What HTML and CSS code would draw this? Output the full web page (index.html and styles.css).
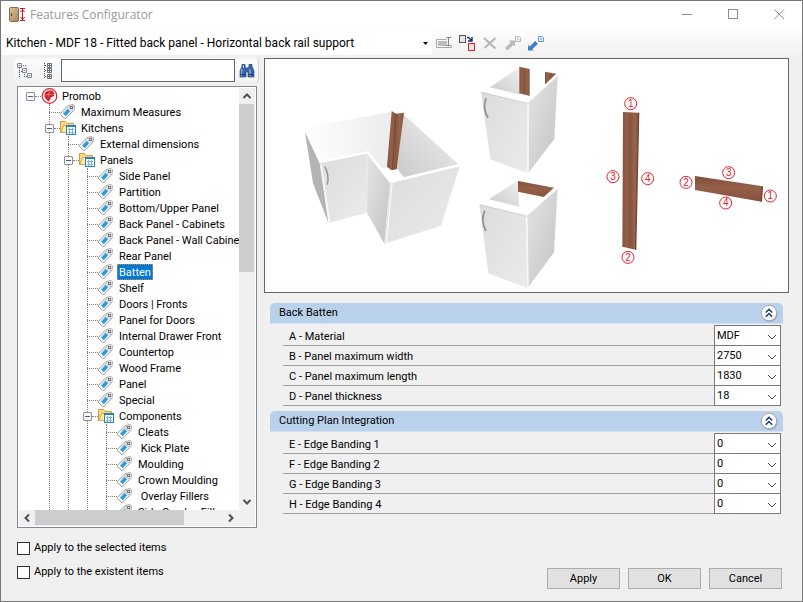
FILE: index.html
```html
<!DOCTYPE html>
<html lang="en">
  <head>
    <meta charset="UTF-8" />
    <meta name="viewport" content="width=device-width, initial-scale=1.0" />
    <title>Features Configurator</title>
    <link rel="stylesheet" href="styles.css">
  </head>
  <body>
    <!-- Shared icons -->
    <svg class="sprite" aria-hidden="true">
      <symbol id="tag" viewBox="0 0 17 16">
        <path d="M.5 9.4 8 1.6 13.2.6 14.4 1.8 13.8 6.4 5.8 14.4 4.6 14.4.5 10.6z" fill="#fbfbfb" stroke="#9a9a9a"/>
        <path d="M8.4 2 13 1 14 2 13.4 6.2 11.6 7.8 7 3.6z" fill="#d6d6d6"/>
        <path d="M3 9.6 7.4 4.6 10.2 7.2 5.8 12.2z" fill="#2f9ad8"/>
        <path d="M3.8 9 7.4 5" stroke="#8accf0"/>
        <rect x="10.5" y="2.5" width="2" height="2" fill="#fff" stroke="#777"/>
      </symbol>
      <symbol id="folder" viewBox="0 0 17 16">
        <path d="M.5 12.5V1.5H5.5L7 3.5H13.5V12.5z" fill="#f8d98a" stroke="#d99a32"/>
        <path d="M1 12.5 3.5 5.5H15.5L13.5 12.5z" fill="#fde9ae" stroke="#e0a848"/>
        <rect x="6.5" y="5.5" width="9" height="9" fill="#fff" stroke="#2383b8"/>
        <path d="M7 6.5H15" stroke="#2383b8"/>
        <path d="M8 9.5H14M8 12.5H14M9.5 8V14M12.5 8V14" stroke="#7cb6da"/>
      </symbol>
      <symbol id="promob" viewBox="0 0 16 16">
        <circle cx="8" cy="8" r="7.3" fill="#fff" stroke="#d8202f" stroke-width="1.2"/>
        <path d="M3.6 4.6 6.4 2.6 10.5 2.6 12.8 5 12.4 8.2 9.4 9.2 8.8 11 7.6 13.4 5.6 12.6 4.2 10.4 3 9 3 6z" fill="#d8202f"/>
        <path d="M7.6 2.8 7.2 8.4M4 6.8 12 6.4" stroke="#f4a0a4" stroke-width=".6"/>
      </symbol>
      <symbol id="chevron" viewBox="0 0 10 6">
        <path d="M1 1 5 5 9 1" fill="none" stroke="currentColor"/>
      </symbol>
      <symbol id="arrow" viewBox="0 0 10 6">
        <path d="M1.5 5 5 1.5 8.5 5" fill="none" stroke="currentColor" stroke-width="2"/>
      </symbol>
      <symbol id="collapse" viewBox="0 0 18 18">
        <circle cx="9.5" cy="9.8" r="8" fill="#8d9bb4"/>
        <circle cx="9" cy="9" r="7.7" fill="#fff" stroke="#a2a9ba"/>
        <path d="M5.8 8.5 9 5.3 12.2 8.5M5.8 12.7 9 9.5 12.2 12.7" fill="none" stroke="#1c3768" stroke-width="1.5"/>
      </symbol>
      <linearGradient id="side" x2="1" y2="1">
        <stop stop-color="#e6e6e6"/>
        <stop offset="1" stop-color="#c2c2c2"/>
      </linearGradient>
      <linearGradient id="door" x2="1" y2="1">
        <stop stop-color="#dcdcdc"/>
        <stop offset="1" stop-color="#ebebeb"/>
      </linearGradient>
      <linearGradient id="inner" x1="1" x2="0" y2="1">
        <stop stop-color="#f0f0f0"/>
        <stop offset="1" stop-color="#cacaca"/>
      </linearGradient>
      <linearGradient id="wall" x2="1">
        <stop stop-color="#fff"/>
        <stop offset="1" stop-color="#ececec"/>
      </linearGradient>
      <linearGradient id="wood" x2="1">
        <stop stop-color="#865440"/>
        <stop offset=".25" stop-color="#935f48"/>
        <stop offset=".5" stop-color="#88553f"/>
        <stop offset=".75" stop-color="#96634b"/>
        <stop offset="1" stop-color="#885540"/>
      </linearGradient>
      <linearGradient id="wood-flat" x2="0" y2="1">
        <stop stop-color="#834e38"/>
        <stop offset=".45" stop-color="#95604a"/>
        <stop offset="1" stop-color="#86523d"/>
      </linearGradient>
      <linearGradient id="beige" x2="1" y2="1">
        <stop stop-color="#dcc39c"/>
        <stop offset="1" stop-color="#a98458"/>
      </linearGradient>
    </svg>

    <div class="window">
      <header class="titlebar">
        <svg class="app-icon" width="17" height="16" viewBox="0 0 17 16">
          <rect x=".5" y=".5" width="9" height="14" rx="1" fill="url(#beige)" stroke="#8c6d48"/>
          <rect x="2" y="6" width="1" height="3" fill="#5c4630"/>
          <path d="M11 1.5H16M11 13.5H16M13.5 2V13M11.5 5 13.5 2.5 15.5 5M11.5 10 13.5 12.5 15.5 10" fill="none" stroke="#d81428"/>
        </svg>
        <h1>Features Configurator</h1>
        <button class="caption" aria-label="Minimize"><svg width="11" height="11"><path d="M0 5.5H10"/></svg></button>
        <button class="caption" aria-label="Maximize"><svg width="11" height="11"><rect x=".5" y=".5" width="9" height="9"/></svg></button>
        <button class="caption" aria-label="Close"><svg width="11" height="11"><path d="M.5.5 10 10M10 .5.5 10"/></svg></button>
      </header>

      <div class="toolbar">
        <div class="profile">
          <select aria-label="Profile">
            <option>Kitchen - MDF 18 - Fitted back panel - Horizontal back rail support</option>
          </select>
          <svg width="5" height="3"><path d="M0 0H5L2.5 3z"/></svg>
        </div>
        <button class="tool" aria-label="Rename">
          <svg width="16" height="16" viewBox="0 0 16 16" fill="none" stroke="#a9a9a9">
            <path d="M10.5 4.5H.5V12.5H15.5V11"/>
            <rect x="2" y="6" width="9" height="5" fill="#bdbdbd" stroke="none"/>
            <path d="M10.5 2.5H15M10.5 10.5H15M12.5 2.5V10.5" stroke="#858585"/>
          </svg>
        </button>
        <button class="tool" aria-label="Duplicate">
          <svg width="16" height="16" viewBox="0 0 16 16" fill="#e4e4ea">
            <rect x=".5" y=".5" width="6" height="7" stroke="#5c5260"/>
            <rect x="9.5" y="8.5" width="6" height="7" stroke="#f01818"/>
            <path d="M8 2.5H9.5L12 5M13 2V6H9" fill="none" stroke="#142a78" stroke-width="1.4"/>
          </svg>
        </button>
        <button class="tool" aria-label="Delete">
          <svg width="16" height="16" viewBox="0 0 16 16"><path d="M2 3 13.5 13.5M13.5 3 2.5 13" stroke="#b5b5b5" stroke-width="2"/></svg>
        </button>
        <button class="tool" aria-label="Export">
          <svg width="16" height="16" viewBox="0 0 16 16">
            <path d="M4 5.5H10V11.5L8 10 2.5 15.5 0 13 5.8 7.5z" fill="#b9b9b9"/>
            <path d="M10.5 1.5H14L15.5 3V6.5H10.5zM12 4H14" fill="#eee" stroke="#b9b9b9"/>
          </svg>
        </button>
        <button class="tool" aria-label="Import">
          <svg width="16" height="16" viewBox="0 0 16 16">
            <path d="M0 15.5V10L1.8 11.5 7.2 6 10 8.8 4.2 14.2 5.8 15.5z" fill="#3a7fd0"/>
            <path d="M10.5 1.5H14L15.5 3V6.5H10.5zM12 4H14" fill="#eef5ff" stroke="#5a97dc"/>
          </svg>
        </button>
      </div>

      <main class="content">
        <aside class="sidebar">
          <div class="search">
            <button class="tool" aria-label="Expand all">
              <svg width="16" height="16" viewBox="0 0 16 16" fill="#fff">
                <path d="M2.5 5V15M5 8.5H2.5M7.5 9V15M10 13.5H7.5M6 2.5H9" stroke="#555" stroke-dasharray="1 1"/>
                <path d="M.5.5H4.5V4.5H.5zM5.5 5.5H9.5V9.5H5.5zM10.5 10.5H14.5V14.5H10.5zM1.5 2.5H3.5M6.5 7.5H8.5M11.5 12.5H13.5" stroke="#7b8a93"/>
              </svg>
            </button>
            <button class="tool" aria-label="Collapse all">
              <svg width="16" height="16" viewBox="0 0 16 16" fill="#fff">
                <path d="M4.5 0V16M5 2.5H8M5 7.5H8M5 13.5H8" stroke="#555" stroke-dasharray="1 1"/>
                <path d="M7.5.5H11.5V4.5H7.5zM7.5 5.5H11.5V9.5H7.5zM7.5 11.5H11.5V15.5H7.5zM9.5 1V4M8 2.5H11M9.5 6V9M8 7.5H11M9.5 12V15M8 13.5H11" stroke="#66727a"/>
              </svg>
            </button>
            <input type="text" aria-label="Search">
            <button class="tool" aria-label="Find">
              <svg width="16" height="14" viewBox="0 0 16 14">
                <path d="M3 0H6V2L7 4H9L10 2V0H13V2L15 7V13H9V8H7V13H1V7L3 2z" fill="#3561a6" stroke="#27487e" stroke-width=".6"/>
                <path d="M3 5 2.4 12M11 5V12M4.5 1V4" stroke="#a9c8f2"/>
                <path d="M1.5 10.5H6.5M9.5 10.5H14.5" stroke="#1e3c72"/>
              </svg>
            </button>
          </div>

          <div class="tree">
            <div class="tree-view">
              <ul class="root">
                <li><div class="node folder"><button aria-label="Collapse"></button><svg><use href="#promob"/></svg><span>Promob</span></div>
                  <ul>
                    <li><div class="node"><svg><use href="#tag"/></svg><span>Maximum Measures</span></div></li>
                    <li><div class="node folder"><button aria-label="Collapse"></button><svg><use href="#folder"/></svg><span>Kitchens</span></div>
                      <ul>
                        <li><div class="node"><svg><use href="#tag"/></svg><span>External dimensions</span></div></li>
                        <li><div class="node folder"><button aria-label="Collapse"></button><svg><use href="#folder"/></svg><span>Panels</span></div>
                          <ul>
                            <li><div class="node"><svg><use href="#tag"/></svg><span>Side Panel</span></div></li>
                            <li><div class="node"><svg><use href="#tag"/></svg><span>Partition</span></div></li>
                            <li><div class="node"><svg><use href="#tag"/></svg><span>Bottom/Upper Panel</span></div></li>
                            <li><div class="node"><svg><use href="#tag"/></svg><span>Back Panel - Cabinets</span></div></li>
                            <li><div class="node"><svg><use href="#tag"/></svg><span>Back Panel - Wall Cabinets</span></div></li>
                            <li><div class="node"><svg><use href="#tag"/></svg><span>Rear Panel</span></div></li>
                            <li><div class="node selected"><svg><use href="#tag"/></svg><span>Batten</span></div></li>
                            <li><div class="node"><svg><use href="#tag"/></svg><span>Shelf</span></div></li>
                            <li><div class="node"><svg><use href="#tag"/></svg><span>Doors | Fronts</span></div></li>
                            <li><div class="node"><svg><use href="#tag"/></svg><span>Panel for Doors</span></div></li>
                            <li><div class="node"><svg><use href="#tag"/></svg><span>Internal Drawer Front</span></div></li>
                            <li><div class="node"><svg><use href="#tag"/></svg><span>Countertop</span></div></li>
                            <li><div class="node"><svg><use href="#tag"/></svg><span>Wood Frame</span></div></li>
                            <li><div class="node"><svg><use href="#tag"/></svg><span>Panel</span></div></li>
                            <li><div class="node"><svg><use href="#tag"/></svg><span>Special</span></div></li>
                            <li><div class="node folder"><button aria-label="Collapse"></button><svg><use href="#folder"/></svg><span>Components</span></div>
                              <ul>
                                <li><div class="node"><svg><use href="#tag"/></svg><span>Cleats</span></div></li>
                                <li><div class="node"><svg><use href="#tag"/></svg><span>&nbsp;Kick Plate</span></div></li>
                                <li><div class="node"><svg><use href="#tag"/></svg><span>Moulding</span></div></li>
                                <li><div class="node"><svg><use href="#tag"/></svg><span>Crown Moulding</span></div></li>
                                <li><div class="node"><svg><use href="#tag"/></svg><span>&nbsp;Overlay Fillers</span></div></li>
                                <li><div class="node"><svg><use href="#tag"/></svg><span>Side Overlay Fillers</span></div></li>
                              </ul>
                            </li>
                          </ul>
                        </li>
                      </ul>
                    </li>
                  </ul>
                </li>
              </ul>
            </div>
            <div class="scroll vertical">
              <button aria-label="Scroll up"><svg width="10" height="6"><use href="#arrow"/></svg></button>
              <div class="track"><div class="thumb"></div></div>
              <button class="down" aria-label="Scroll down"><svg width="10" height="6"><use href="#arrow"/></svg></button>
            </div>
            <div class="scroll horizontal">
              <button class="left" aria-label="Scroll left"><svg width="10" height="6"><use href="#arrow"/></svg></button>
              <div class="track"><div class="thumb"></div></div>
              <button class="right" aria-label="Scroll right"><svg width="10" height="6"><use href="#arrow"/></svg></button>
            </div>
            <div class="scroll"></div>
          </div>

          <div class="options">
            <label><input type="checkbox"> Apply to the selected items</label>
            <label><input type="checkbox"> Apply to the existent items</label>
          </div>
        </aside>

        <section class="details">
          <div class="preview">
            <svg viewBox="0 0 1569 699" role="img" aria-label="Batten positions">
              <!-- Cabinets -->
              <g transform="translate(90 3)">
                <path d="M28 203 290 155 280 322 262 325 218 276 75 305z" fill="url(#wall)"/>
                <path d="M325 163 490 313 327 352 305 325z" fill="url(#inner)"/>
                <path d="M290 153 303 161 327 158 305 328 290 331 276 320z" fill="url(#wood)"/>
                <path d="M303 161 292 328" stroke="#6e3f2a" stroke-width="2"/>
                <path d="M28 203 74 308 100 488 54 370z" fill="#b4b4b4"/>
                <path d="M74 308 218 278 216 458 102 488z" fill="url(#door)"/>
                <path d="M218 278 285 368 268 551 216 458z" fill="url(#side)"/>
                <path d="M285 368 495 316 438 497 268 551z" fill="url(#door)"/>
                <path d="M28 203 76 306 218 277 286 366 494 315" fill="none" stroke="#fff" stroke-width="7"/>
                <path d="M78 312 104 486M291 368 274 549" stroke="#fafafa" stroke-width="4"/>
                <path d="M89 320Q104 345 97 374" fill="none" stroke="#8d8d8d" stroke-width="4"/>

                <path d="M585 82 673 22 676 104z" fill="url(#inner)"/>
                <path d="M673 20 704 27V108L673 100z" fill="url(#wood)"/>
                <path d="M750 35 784 41 750 74z" fill="url(#wood)"/>
                <path d="M697 128 788 44 778 237 699 340z" fill="url(#side)"/>
                <path d="M558 94 697 128 699 340 586 298z" fill="url(#door)"/>
                <path d="M788 44 697 126 558 92" fill="none" stroke="#fff" stroke-width="7"/>
                <path d="M560 97 697 130" stroke="#c4c4c4" stroke-width="2"/>
                <path d="M699 132V338" stroke="#f8f8f8" stroke-width="5"/>
                <path d="M573 115Q562 148 579 173" fill="none" stroke="#8d8d8d" stroke-width="5"/>

                <path d="M582 418 669 361 673 440z" fill="url(#inner)"/>
                <path d="M669 363 777 383 746 411 669 395z" fill="url(#wood-flat)"/>
                <path d="M693 466 788 382 777 577 698 684z" fill="url(#side)"/>
                <path d="M553 431 693 466 698 684 580 640z" fill="url(#door)"/>
                <path d="M788 382 694 464 553 429" fill="none" stroke="#fff" stroke-width="7"/>
                <path d="M555 434 693 468" stroke="#c4c4c4" stroke-width="2"/>
                <path d="M695 470 699 682" stroke="#f8f8f8" stroke-width="5"/>
                <path d="M569 452Q556 485 573 513" fill="none" stroke="#8d8d8d" stroke-width="5"/>
              </g>
              <!-- Battens with numbered edges -->
              <g transform="translate(975 63)">
                <path d="M99 96 146 98 137 509 97 500z" fill="url(#wood)"/>
                <path d="M146 98 137 509" stroke="#6f4632" stroke-width="4"/>
                <path d="M315 288 518 319 515 365 315 330z" fill="url(#wood-flat)"/>
                <path d="M517 319 514 365" stroke="#6f4632" stroke-width="4"/>
                <g class="mark"><circle cx="122" cy="71" r="18"/><text x="122" y="81">1</text></g>
                <g class="mark"><circle cx="114" cy="532" r="18"/><text x="114" y="542">2</text></g>
                <g class="mark"><circle cx="69" cy="290" r="18"/><text x="69" y="300">3</text></g>
                <g class="mark"><circle cx="173" cy="296" r="18"/><text x="173" y="306">4</text></g>
                <g class="mark"><circle cx="541" cy="348" r="18"/><text x="541" y="358">1</text></g>
                <g class="mark"><circle cx="288" cy="307" r="18"/><text x="288" y="317">2</text></g>
                <g class="mark"><circle cx="416" cy="278" r="18"/><text x="416" y="288">3</text></g>
                <g class="mark"><circle cx="407" cy="369" r="18"/><text x="407" y="379">4</text></g>
              </g>
            </svg>
          </div>

          <div class="groups">
            <section class="group">
              <h2>Back Batten <button aria-label="Collapse group"><svg width="18" height="18"><use href="#collapse"/></svg></button></h2>
              <div class="fields">
                <div class="field">
                  <label for="material">A - Material</label>
                  <select id="material"><option>MDF</option></select>
                  <svg><use href="#chevron"/></svg>
                </div>
                <div class="field">
                  <label for="maxWidth">B - Panel maximum width</label>
                  <select id="maxWidth"><option>2750</option></select>
                  <svg><use href="#chevron"/></svg>
                </div>
                <div class="field">
                  <label for="maxLength">C - Panel maximum length</label>
                  <select id="maxLength"><option>1830</option></select>
                  <svg><use href="#chevron"/></svg>
                </div>
                <div class="field">
                  <label for="thickness">D - Panel thickness</label>
                  <select id="thickness"><option>18</option></select>
                  <svg><use href="#chevron"/></svg>
                </div>
              </div>
            </section>

            <section class="group">
              <h2>Cutting Plan Integration <button aria-label="Collapse group"><svg width="18" height="18"><use href="#collapse"/></svg></button></h2>
              <div class="fields">
                <div class="field">
                  <label for="edge1">E - Edge Banding 1</label>
                  <select id="edge1"><option>0</option></select>
                  <svg><use href="#chevron"/></svg>
                </div>
                <div class="field">
                  <label for="edge2">F - Edge Banding 2</label>
                  <select id="edge2"><option>0</option></select>
                  <svg><use href="#chevron"/></svg>
                </div>
                <div class="field">
                  <label for="edge3">G - Edge Banding 3</label>
                  <select id="edge3"><option>0</option></select>
                  <svg><use href="#chevron"/></svg>
                </div>
                <div class="field">
                  <label for="edge4">H - Edge Banding 4</label>
                  <select id="edge4"><option>0</option></select>
                  <svg><use href="#chevron"/></svg>
                </div>
              </div>
            </section>
          </div>

          <div class="actions">
            <button>Apply</button>
            <button>OK</button>
            <button>Cancel</button>
          </div>
        </section>
      </main>
    </div>
  </body>
</html>
```
FILE: styles.css
```css
* {
  box-sizing: border-box;
}
body {
  margin: 0;
  font-family: Roboto, "Liberation Sans", sans-serif;
  font-size: 11px;
  line-height: 16px;
  color: #000;
}
button,
input,
select {
  font: inherit;
  color: inherit;
}
button {
  display: flex;
  align-items: center;
  justify-content: center;
  padding: 0;
  border: 0;
  background: none;
}
svg {
  display: block;
  flex: none;
}
select {
  appearance: none;
  border-radius: 0;
}
.sprite {
  position: absolute;
  width: 0;
  height: 0;
}
.window {
  display: flex;
  flex-direction: column;
  height: 100vh;
  border: 1px solid #777;
  background-color: #f0f0f0;
}

/* Title bar */
.titlebar {
  display: flex;
  align-items: center;
  height: 29px;
  padding: 0 0 2px 8px;
  background-color: #fff;
}
.titlebar h1 {
  flex: 1;
  margin: 0 0 0 4px;
  font-family: "Open Sans", sans-serif;
  font-size: 12px;
  font-weight: normal;
  color: #999;
}
.caption {
  width: 46px;
  height: 27px;
}
.caption svg {
  fill: none;
  stroke: #8a8a8a;
}

/* Main toolbar */
.toolbar {
  display: flex;
  align-items: center;
  gap: 7px;
  height: 28px;
  padding: 0 0 3px 1px;
  background: linear-gradient(#fdfdfd, #f0f0f0);
}
.profile {
  position: relative;
  width: 430px;
  margin-right: -3px;
}
.profile select {
  width: 100%;
  height: 24px;
  padding: 0 16px 0 4px;
  border: 0;
  background-color: #fff;
  font-size: 12px;
}
.profile svg {
  position: absolute;
  top: 11px;
  right: 4px;
}
.tool {
  min-width: 16px;
  height: 16px;
}

.content {
  display: flex;
  flex: 1;
  gap: 5px;
  min-height: 0;
  padding-right: 13px;
}

/* Left column */
.sidebar {
  display: flex;
  flex-direction: column;
  width: 258px;
  padding-left: 13px;
}
.search {
  display: flex;
  align-items: center;
  gap: 4px;
  height: 25px;
  padding: 0 3px;
  border-right: 1px solid #ccc;
  border-radius: 4px;
  background: linear-gradient(#fcfcfc, #f2f2f2);
}
.search input {
  flex: 1;
  min-width: 0;
  height: 23px;
  margin-left: 1px;
  border: 1px solid #646464;
  background-color: #fff;
}
.search .tool + .tool {
  margin-left: 3px;
}
.tree {
  display: grid;
  grid-template: minmax(0, 1fr) 16px / minmax(0, 1fr) 16px;
  flex: 1;
  min-height: 0;
  margin: 3px 2px 0 3px;
  padding: 1px;
  border: 1px solid #828790;
  background-color: #fff;
}
.tree-view {
  overflow: hidden;
}
.tree ul {
  margin: 0 0 0 19px;
  padding: 0;
  border-left: 1px dotted #808080;
  list-style: none;
}
.tree li {
  margin-left: -1px;
}
.tree .root {
  margin-left: 11px;
  border-left: 0;
}
.tree .root > li {
  margin-left: 0;
}
.node {
  display: flex;
  align-items: center;
  height: 16px;
  white-space: nowrap;
}
.node::before {
  content: "";
  flex: none;
  order: -1;
  width: 11px;
  border-top: 1px dotted #808080;
}
.node.folder::before {
  order: 0;
  width: 6px;
}
.node button {
  flex: none;
  order: -1;
  width: 9px;
  height: 9px;
  margin-left: -4px;
  border: 1px solid #919191;
  border-radius: 1px;
  background-color: #f8f8f8;
}
.node button::before {
  content: "";
  width: 5px;
  height: 1px;
  background-color: #3c5aa8;
}
.node svg {
  order: 1;
  width: 17px;
  height: 16px;
}
.node span {
  order: 2;
  height: 16px;
  margin-left: 2px;
  padding: 0 2px;
  line-height: 18px;
}
.node.selected span {
  outline: 1px dotted #e08a30;
  outline-offset: -1px;
  background-color: #0078d7;
  color: #fff;
}

/* Scroll bars */
.scroll {
  display: flex;
  background-color: #f0f0f0;
  color: #505050;
}
.scroll.vertical {
  flex-direction: column;
}
.scroll button {
  width: 16px;
  height: 16px;
}
.scroll .down svg {
  transform: rotate(180deg);
}
.scroll .left svg {
  transform: rotate(-90deg);
}
.scroll .right svg {
  transform: rotate(90deg);
}
.track {
  flex: 1;
}
.thumb {
  background-color: #cdcdcd;
}
.vertical .thumb {
  width: 15px;
  height: 43%;
}
.horizontal .thumb {
  width: 79%;
  height: 15px;
}

.options {
  display: flex;
  flex-direction: column;
  gap: 8px;
  padding: 12px 3px 21px;
}
.options label {
  display: flex;
  align-items: center;
  gap: 4px;
}
.options input {
  appearance: none;
  width: 13px;
  height: 13px;
  margin: 0;
  border: 1px solid #333;
  background-color: #fff;
}

/* Right column */
.details {
  display: flex;
  flex-direction: column;
  flex: 1;
  min-width: 0;
}
.preview {
  border: 1px solid #646464;
  background-color: #fff;
}
.preview svg {
  width: 100%;
  height: auto;
}
.mark circle {
  fill: #fff;
  stroke: #e8202c;
  stroke-width: 3px;
}
.mark text {
  font-family: "Liberation Sans", sans-serif;
  font-size: 30px;
  text-anchor: middle;
  fill: #e8202c;
}
.groups {
  display: flex;
  flex-direction: column;
  flex: 1;
  gap: 5px;
  padding: 10px 6px 0;
}
.group h2 {
  display: flex;
  align-items: center;
  justify-content: space-between;
  height: 21px;
  margin: 0 0 2px;
  padding: 0 5px 0 9px;
  border-bottom: 1px solid #d3e2f2;
  border-radius: 5px 5px 0 0;
  background-color: #b9d1ea;
  font-size: inherit;
  font-weight: normal;
}
.fields {
  margin: 0 2px 0 13px;
}
.field {
  position: relative;
  display: flex;
  height: 20px;
  border-bottom: 1px solid #a0a0a0;
}
.field label {
  flex: 1;
  padding: 3px 6px 0;
}
.field select {
  width: 67px;
  height: 21px;
  margin-top: -1px;
  padding: 0 2px;
  border: 1px solid #7a7a7a;
  background-color: #fff;
}
.field svg {
  position: absolute;
  top: 8px;
  right: 4px;
  width: 10px;
  height: 6px;
  color: #444;
  pointer-events: none;
}
.actions {
  display: flex;
  justify-content: flex-end;
  gap: 8px;
  padding: 0 7px 12px 0;
}
.actions button {
  width: 73px;
  height: 21px;
  border: 1px solid #adadad;
  background-color: #e1e1e1;
}
```
